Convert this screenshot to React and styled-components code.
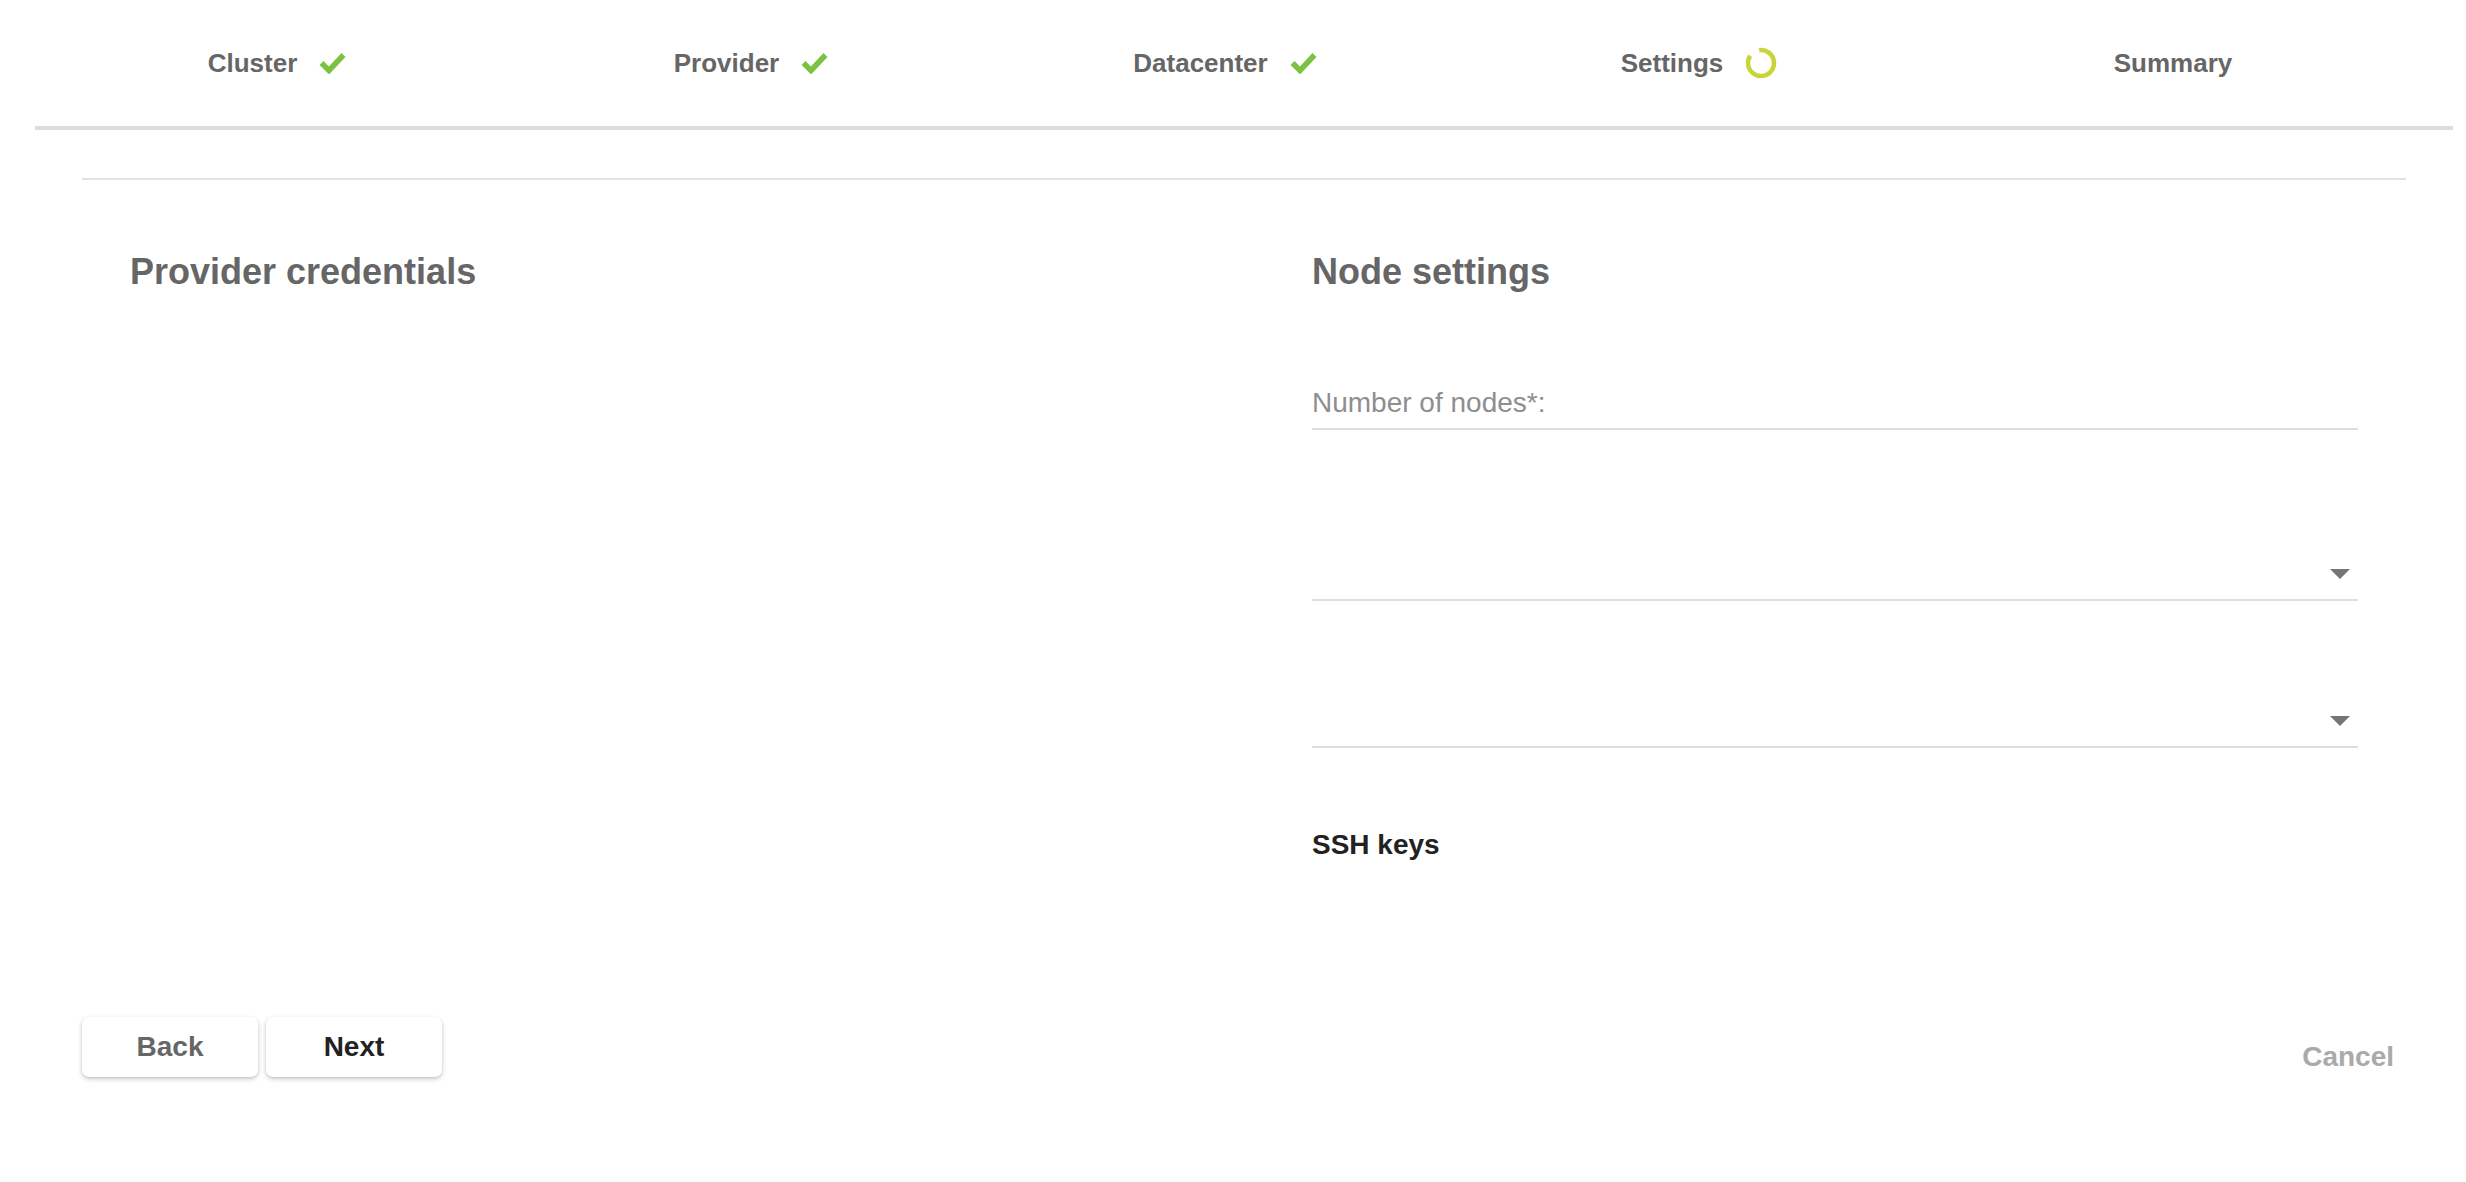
import React from 'react'
import styled, { createGlobalStyle } from 'styled-components'

const GlobalStyle = createGlobalStyle`
  body {
    margin: 0;
    background: #fff;
    font-family: "Liberation Sans", Arial, Helvetica, sans-serif;
  }
`

const Page = styled.div`
  width: 2466px;
  min-height: 1182px;
`

const Header = styled.div`
  margin: 0 13px 0 35px;
  border-bottom: 4px solid #dcdcdc;
`

const Steps = styled.div`
  display: grid;
  grid-template-columns: repeat(5, 1fr);
  padding: 0 43px 0 5px;
  height: 126px;
`

const Step = styled.div`
  display: flex;
  align-items: center;
  justify-content: center;
  gap: 22px;
`

const StepLabel = styled.span`
  font-size: 26px;
  font-weight: bold;
  color: #666;
`

const Content = styled.div`
  margin: 48px 60px 0 82px;
  border-top: 2px solid #e2e2e2;
`

const Columns = styled.div`
  display: grid;
  grid-template-columns: 1fr 1fr;
  column-gap: 136px;
  padding: 0 48px;
`

const Column = styled.div`
  display: flex;
  flex-direction: column;
`

const Heading = styled.h2`
  margin: 70px 0 0;
  font-size: 36px;
  line-height: 44px;
  font-weight: bold;
  color: #666;
`

const Field = styled.div`
  height: ${props => props.height}px;
  display: flex;
  flex-direction: column;
  justify-content: flex-end;
  border-bottom: 2px solid #dedede;
`

const FieldRow = styled.div`
  display: flex;
  align-items: center;
  justify-content: space-between;
  height: 40px;
  margin-bottom: 5px;
`

const FieldLabel = styled.span`
  font-size: 28px;
  color: #8e8e8e;
`

const Caret = styled.span`
  width: 0;
  height: 0;
  margin-right: 8px;
  border-left: 10px solid transparent;
  border-right: 10px solid transparent;
  border-top: 10px solid #757575;
`

const SubHeading = styled.div`
  margin-top: 77px;
  font-size: 28px;
  line-height: 40px;
  font-weight: bold;
  color: #222;
`

const Footer = styled.div`
  display: flex;
  align-items: flex-start;
  justify-content: space-between;
  margin-top: 152px;
  padding-right: 12px;
`

const ButtonGroup = styled.div`
  display: flex;
  gap: 8px;
`

const Button = styled.button`
  width: 176px;
  height: 60px;
  border: none;
  border-radius: 7px;
  background: #fff;
  box-shadow: 0 2px 5px rgba(0, 0, 0, 0.2), 0 1px 2px rgba(0, 0, 0, 0.08);
  font-family: inherit;
  font-size: 28px;
  font-weight: bold;
  color: ${props => (props.primary ? '#222' : '#666')};
  cursor: pointer;
`

const CancelButton = styled.button`
  margin-top: 26px;
  padding: 0;
  border: none;
  background: none;
  font-family: inherit;
  font-size: 28px;
  line-height: 28px;
  font-weight: bold;
  color: #aaa;
`

const Check = () => (
  <svg width="27" height="22" viewBox="0 0 27 22">
    <polyline points="2.5,11 10,18.5 24.5,3" fill="none" stroke="#7cc242" strokeWidth="5.5" />
  </svg>
)

const Spinner = () => (
  <svg width="32" height="32" viewBox="0 0 32 32">
    <circle
      cx="16"
      cy="16"
      r="13"
      fill="none"
      stroke="#c9d43a"
      strokeWidth="4.5"
      strokeDasharray="70.3 81.7"
      transform="rotate(262 16 16)"
    />
  </svg>
)

const steps = [
  { label: 'Cluster', status: 'done' },
  { label: 'Provider', status: 'done' },
  { label: 'Datacenter', status: 'done' },
  { label: 'Settings', status: 'active' },
  { label: 'Summary' },
]

function App() {
  return (
    <Page>
      <GlobalStyle />
      <Header>
        <Steps>
          {steps.map(step => (
            <Step key={step.label}>
              <StepLabel>{step.label}</StepLabel>
              {step.status === 'done' && <Check />}
              {step.status === 'active' && <Spinner />}
            </Step>
          ))}
        </Steps>
      </Header>
      <Content>
        <Columns>
          <Column>
            <Heading>Provider credentials</Heading>
          </Column>
          <Column>
            <Heading>Node settings</Heading>
            <Field height={134}>
              <FieldRow>
                <FieldLabel>Number of nodes*:</FieldLabel>
              </FieldRow>
            </Field>
            <Field height={169}>
              <FieldRow>
                <span />
                <Caret />
              </FieldRow>
            </Field>
            <Field height={145}>
              <FieldRow>
                <span />
                <Caret />
              </FieldRow>
            </Field>
            <SubHeading>SSH keys</SubHeading>
          </Column>
        </Columns>
        <Footer>
          <ButtonGroup>
            <Button>Back</Button>
            <Button primary>Next</Button>
          </ButtonGroup>
          <CancelButton>Cancel</CancelButton>
        </Footer>
      </Content>
    </Page>
  )
}

export default App
